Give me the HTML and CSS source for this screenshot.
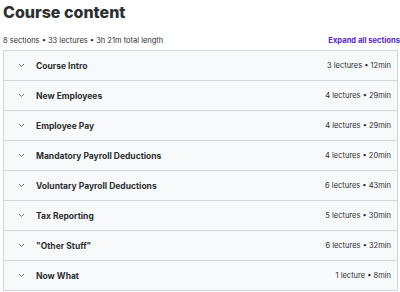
FILE: index.html
```html
<!DOCTYPE html>
<html>
<head>
<meta charset="utf-8">
<link rel="stylesheet" href="styles.css">
</head>
<body>
<div class="page">
  <h2 class="title">Course content</h2>
  <div class="meta">
    <span class="stats">8 sections • 33 lectures • 3h 21m total length</span>
    <span class="expand">Expand all sections</span>
  </div>
  <div class="sections">
    <div class="row"><span class="chev"><svg width="7" height="5" viewBox="0 0 7 5"><path d="M1 1l2.5 2.5L6 1" fill="none" stroke="#6a6f73" stroke-width="1"/></svg></span><span class="name">Course Intro</span><span class="info">3 lectures • 12min</span></div>
    <div class="row"><span class="chev"><svg width="7" height="5" viewBox="0 0 7 5"><path d="M1 1l2.5 2.5L6 1" fill="none" stroke="#6a6f73" stroke-width="1"/></svg></span><span class="name">New Employees</span><span class="info">4 lectures • 29min</span></div>
    <div class="row"><span class="chev"><svg width="7" height="5" viewBox="0 0 7 5"><path d="M1 1l2.5 2.5L6 1" fill="none" stroke="#6a6f73" stroke-width="1"/></svg></span><span class="name">Employee Pay</span><span class="info">4 lectures • 29min</span></div>
    <div class="row"><span class="chev"><svg width="7" height="5" viewBox="0 0 7 5"><path d="M1 1l2.5 2.5L6 1" fill="none" stroke="#6a6f73" stroke-width="1"/></svg></span><span class="name">Mandatory Payroll Deductions</span><span class="info">4 lectures • 20min</span></div>
    <div class="row"><span class="chev"><svg width="7" height="5" viewBox="0 0 7 5"><path d="M1 1l2.5 2.5L6 1" fill="none" stroke="#6a6f73" stroke-width="1"/></svg></span><span class="name">Voluntary Payroll Deductions</span><span class="info">6 lectures • 43min</span></div>
    <div class="row"><span class="chev"><svg width="7" height="5" viewBox="0 0 7 5"><path d="M1 1l2.5 2.5L6 1" fill="none" stroke="#6a6f73" stroke-width="1"/></svg></span><span class="name">Tax Reporting</span><span class="info">5 lectures • 30min</span></div>
    <div class="row"><span class="chev"><svg width="7" height="5" viewBox="0 0 7 5"><path d="M1 1l2.5 2.5L6 1" fill="none" stroke="#6a6f73" stroke-width="1"/></svg></span><span class="name">"Other Stuff"</span><span class="info">6 lectures • 32min</span></div>
    <div class="row"><span class="chev"><svg width="7" height="5" viewBox="0 0 7 5"><path d="M1 1l2.5 2.5L6 1" fill="none" stroke="#6a6f73" stroke-width="1"/></svg></span><span class="name">Now What</span><span class="info">1 lecture • 8min</span></div>
  </div>
</div>
</body>
</html>
```
FILE: styles.css
```css
html, body { margin: 0; padding: 0; background: #fff; }
body { font-family: "Inter", "Liberation Sans", sans-serif; color: #2d2f31; }
.page { padding: 0 0 0 3px; width: 397px; }
.title { margin: 0; padding-top: 2px; font-size: 16px; font-weight: 800; line-height: 20px; height: 29px; }
.meta { display: flex; justify-content: space-between; align-items: center; height: 18px; font-size: 7.5px; }
.stats { color: #2d2f31; }
.expand { color: #5624d0; font-weight: 700; font-size: 7.6px; white-space: nowrap; }
.sections { margin: 1px 2px 0 0; border: 1px solid #d1d7dc; }
.row { display: flex; align-items: center; height: 29px; background: #f7f9fa; border-bottom: 1px solid #d1d7dc; padding: 0 6px 0 14px; }
.row:last-child { border-bottom: none; }
.chev { width: 18px; display: flex; align-items: center; }
.name { flex: 1; font-size: 8.5px; font-weight: 700; }
.info { font-size: 7.5px; color: #2d2f31; }
```
